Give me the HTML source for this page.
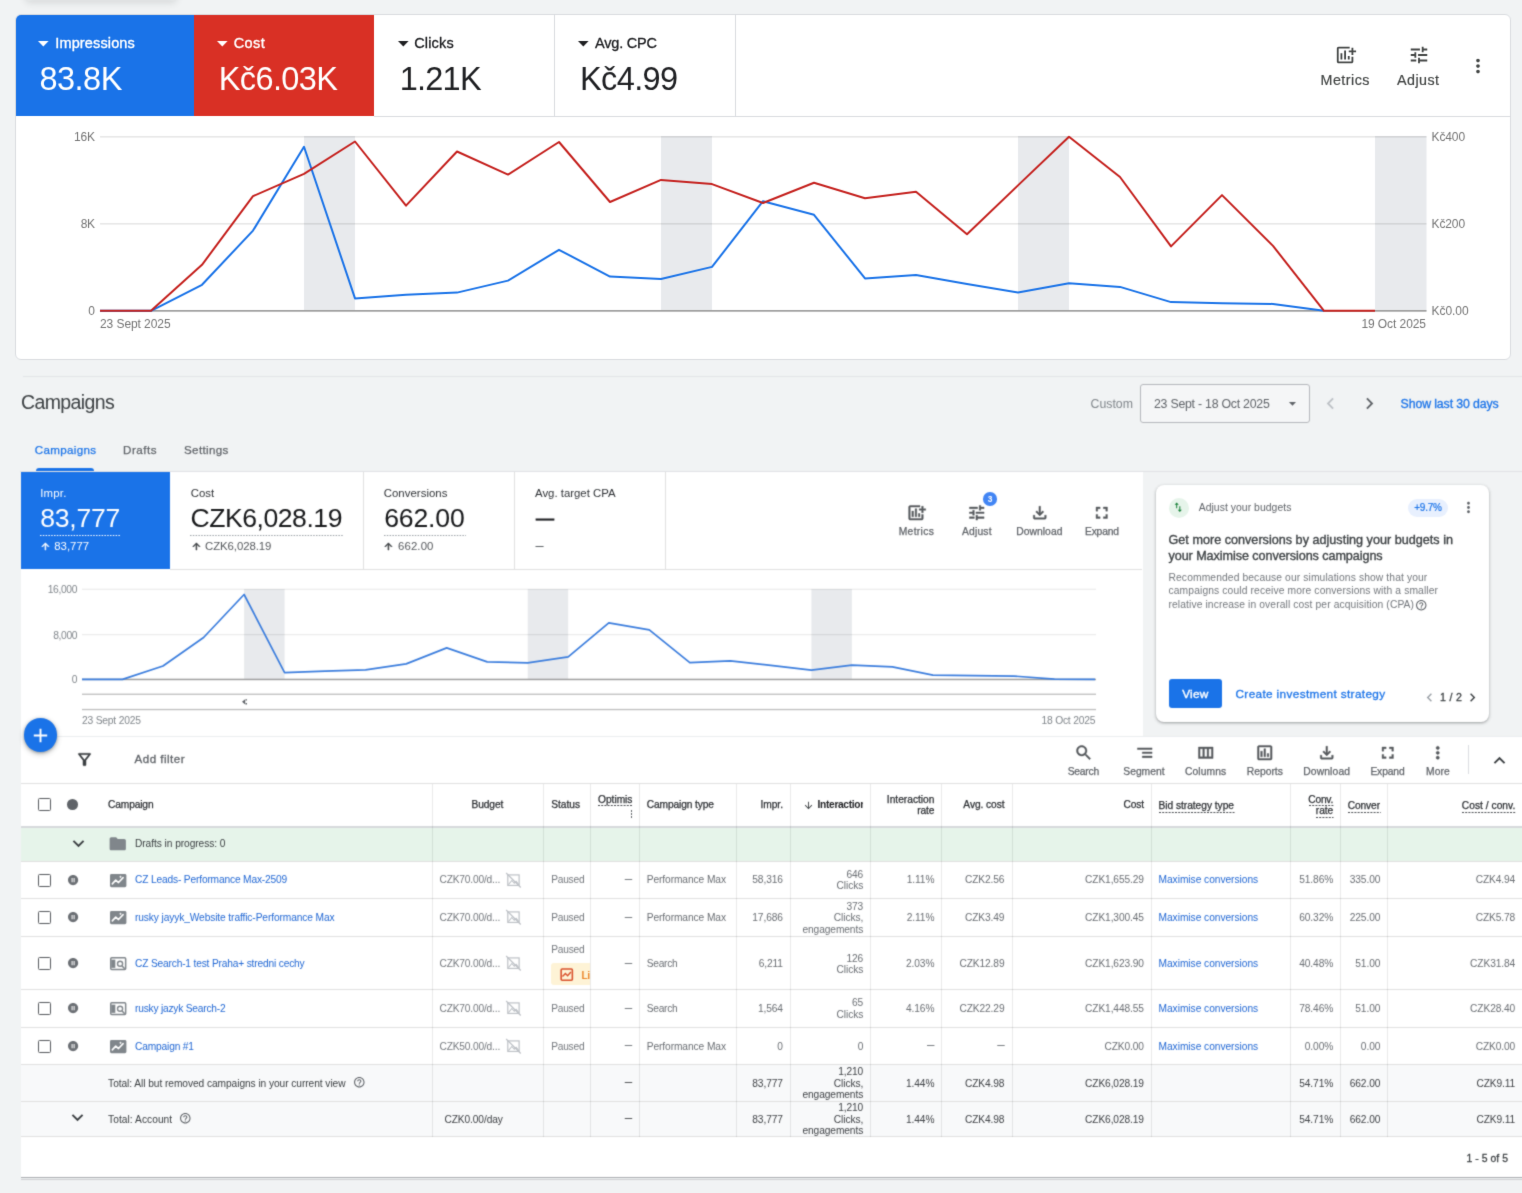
<!DOCTYPE html>
<html lang="en"><head><meta charset="utf-8"><title>Campaigns</title><style>
html,body{margin:0;padding:0;overflow:hidden}
body{width:1522px;height:1193px;overflow:hidden;background:#f1f3f4;position:relative;font-family:"Liberation Sans",sans-serif;-webkit-font-smoothing:antialiased}
.t{position:absolute;white-space:nowrap;line-height:1}
.r{position:absolute;box-sizing:border-box}
.i{position:absolute;display:block;overflow:visible}
.layer{position:absolute;left:0;top:0;width:1522px;height:1193px}
.sharp{filter:url(#f1)}
.soft{filter:url(#f2)}
</style></head><body>
<svg width="0" height="0" style="position:absolute" aria-hidden="true"><defs><filter id="f1" x="0" y="0" width="100%" height="100%" color-interpolation-filters="sRGB"><feConvolveMatrix order="3" kernelMatrix="0 1 0 1 8 1 0 1 0" divisor="12" edgeMode="duplicate" preserveAlpha="false"/></filter><filter id="f2" x="0" y="0" width="100%" height="100%" color-interpolation-filters="sRGB"><feConvolveMatrix order="3" kernelMatrix="1 3 1 3 16 3 1 3 1" divisor="32" edgeMode="duplicate" preserveAlpha="false"/></filter></defs></svg>
<!-- sec1 -->
<div class="layer sharp">
<div class="r" style="left:26px;top:-16px;width:150px;height:16px;background:#fff;border-radius:4px;box-shadow:0 2px 7px 1px rgba(60,64,67,.14)"></div>
<div class="r" style="left:15px;top:14px;width:1496px;height:346px;background:#fff;border:1px solid #dadce0;border-radius:6px;overflow:hidden"></div>
<div class="r" style="left:16px;top:15px;width:178px;height:101px;background:#1a73e8;border-top-left-radius:5px;"></div>
<div class="r" style="left:194px;top:15px;width:180px;height:101px;background:#d93025;"></div>
<div class="r" style="left:554px;top:15px;width:1px;height:101px;background:#dadce0;"></div>
<div class="r" style="left:735px;top:15px;width:1px;height:101px;background:#dadce0;"></div>
<div class="r" style="left:374px;top:116px;width:1136px;height:1px;background:#dadce0;"></div>
<svg class="i" style="left:37.8px;top:40.8px" width="10.6" height="5.6" viewBox="0 0 10 5" preserveAspectRatio="none"><path fill="#fff" d="M0 0h10L5 5z"/></svg>
<div class="t" style="left:55.30px;top:36.23px;font-size:14.5px;color:#fff;letter-spacing:0.131px;-webkit-text-stroke:0.35px #fff;">Impressions</div>
<div class="t" style="left:39.40px;top:63.19px;font-size:32.5px;color:#fff;letter-spacing:-0.485px;">83.8K</div>
<svg class="i" style="left:217.2px;top:40.8px" width="10.6" height="5.6" viewBox="0 0 10 5" preserveAspectRatio="none"><path fill="#fff" d="M0 0h10L5 5z"/></svg>
<div class="t" style="left:233.70px;top:36.23px;font-size:14.5px;color:#fff;letter-spacing:0.422px;-webkit-text-stroke:0.35px #fff;">Cost</div>
<div class="t" style="left:218.80px;top:63.19px;font-size:32.5px;color:#fff;letter-spacing:-0.622px;">Kč6.03K</div>
<svg class="i" style="left:397.6px;top:40.8px" width="10.6" height="5.6" viewBox="0 0 10 5" preserveAspectRatio="none"><path fill="#202124" d="M0 0h10L5 5z"/></svg>
<div class="t" style="left:414.20px;top:36.23px;font-size:14.5px;color:#202124;letter-spacing:0.156px;-webkit-text-stroke:0.3px #202124;">Clicks</div>
<div class="t" style="left:399.80px;top:63.19px;font-size:32.5px;color:#202124;letter-spacing:-0.785px;">1.21K</div>
<svg class="i" style="left:578.2px;top:40.8px" width="10.6" height="5.6" viewBox="0 0 10 5" preserveAspectRatio="none"><path fill="#202124" d="M0 0h10L5 5z"/></svg>
<div class="t" style="left:595.00px;top:36.23px;font-size:14.5px;color:#202124;letter-spacing:-0.199px;-webkit-text-stroke:0.3px #202124;">Avg. CPC</div>
<div class="t" style="left:580.00px;top:63.19px;font-size:32.5px;color:#202124;letter-spacing:-0.613px;">Kč4.99</div>
<svg class="i" style="left:1334.50px;top:44.00px;" width="22" height="22" viewBox="0 0 24 24"><path fill="#444746" d="M6 9.99h2v7H6zm8 3h2v4h-2zm-4-6h2v10h-2zM20 7V4h-2v3h-3v2h3v3h2V9h3V7zm-2 12H4V5h12V3H4c-1.1 0-2 .9-2 2v14c0 1.1.9 2 2 2h14c1.1 0 2-.9 2-2v-5h-2v5z"/></svg>
<div class="t" style="left:1320.49px;top:72.90px;font-size:14.3px;color:#444746;letter-spacing:0.489px;-webkit-text-stroke:0.2px #444746;">Metrics</div>
<svg class="i" style="left:1407.50px;top:44.00px;" width="22" height="22" viewBox="0 0 24 24"><path fill="#444746" d="M3 17v2h6v-2H3zM3 5v2h10V5H3zm10 16v-2h8v-2h-8v-2h-2v6h2zM7 9v2H3v2h4v2h2V9H7zm14 4v-2H11v2h10zm-6-4h2V7h4V5h-4V3h-2v6z"/></svg>
<div class="t" style="left:1396.98px;top:72.90px;font-size:14.3px;color:#444746;letter-spacing:0.460px;-webkit-text-stroke:0.2px #444746;">Adjust</div>
<svg class="i" style="left:1467.00px;top:55.00px;" width="22" height="22" viewBox="0 0 24 24"><path fill="#444746" d="M12 8c1.1 0 2-.9 2-2s-.9-2-2-2-2 .9-2 2 .9 2 2 2zm0 2c-1.1 0-2 .9-2 2s.9 2 2 2 2-.9 2-2-.9-2-2-2zm0 6c-1.1 0-2 .9-2 2s.9 2 2 2 2-.9 2-2-.9-2-2-2z"/></svg>
<svg class="i" style="left:0;top:120px" width="1522" height="220" viewBox="0 120 1522 220"><rect x="304" y="136" width="51" height="175" fill="#e8eaed"/><rect x="661" y="136" width="51" height="175" fill="#e8eaed"/><rect x="1018" y="136" width="51" height="175" fill="#e8eaed"/><rect x="1375" y="136" width="51.5" height="175" fill="#e8eaed"/><rect x="100" y="136.05" width="1326.5" height="1.5" fill="#000" fill-opacity="0.1"/><rect x="100" y="223.05" width="1326.5" height="1.5" fill="#000" fill-opacity="0.1"/><rect x="100" y="310" width="1326.5" height="1.7" fill="#9e9e9e"/><polyline points="100.0,310.8 151.0,310.8 202.0,284.8 253.0,230.6 304.0,146.8 355.0,298.4 406.0,294.7 457.0,292.6 508.0,280.6 559.0,249.8 610.0,276.6 661.0,279.0 712.0,266.9 763.0,201.2 814.0,214.8 865.0,278.4 916.0,275.0 967.0,284.0 1018.0,292.6 1069.0,283.2 1120.0,286.9 1171.0,302.1 1222.0,303.2 1273.0,303.9 1324.0,310.8" fill="none" stroke="#1a73e8" stroke-width="2" stroke-linejoin="round"/><polyline points="100.0,310.8 151.0,310.8 202.0,264.8 253.0,196.2 304.0,173.8 355.0,141.5 406.0,205.6 457.0,151.5 508.0,174.6 559.0,142.0 610.0,202.0 661.0,179.9 712.0,184.1 763.0,203.0 814.0,182.8 865.0,198.3 916.0,191.7 967.0,234.3 1018.0,185.4 1069.0,136.8 1120.0,177.0 1171.0,246.4 1222.0,195.1 1273.0,245.9 1324.0,310.8 1375.0,310.8" fill="none" stroke="#c5221f" stroke-width="2" stroke-linejoin="round"/></svg>
<div class="t" style="left:73.88px;top:130.84px;font-size:12px;color:#757575;letter-spacing:-0.117px;">16K</div>
<div class="t" style="left:80.66px;top:217.84px;font-size:12px;color:#757575;letter-spacing:-0.339px;">8K</div>
<div class="t" style="left:88.33px;top:304.84px;font-size:12px;color:#757575;">0</div>
<div class="t" style="left:100.00px;top:317.84px;font-size:12px;color:#757575;letter-spacing:-0.074px;">23 Sept 2025</div>
<div class="t" style="left:1361.42px;top:317.84px;font-size:12px;color:#757575;letter-spacing:-0.079px;">19 Oct 2025</div>
<div class="t" style="left:1431.50px;top:130.84px;font-size:12px;color:#757575;letter-spacing:-0.105px;">Kč400</div>
<div class="t" style="left:1431.50px;top:217.84px;font-size:12px;color:#757575;letter-spacing:-0.105px;">Kč200</div>
<div class="t" style="left:1431.50px;top:304.84px;font-size:12px;color:#757575;letter-spacing:-0.060px;">Kč0.00</div>
</div>
<!-- sec2 -->
<div class="layer soft">
<div class="r" style="left:23px;top:375.7px;width:1499px;height:1.2px;background:#e2e4e6;"></div>
<div class="t" style="left:21.00px;top:393.49px;font-size:19.5px;color:#3c4043;letter-spacing:-0.625px;">Campaigns</div>
<div class="t" style="left:1090.50px;top:397.59px;font-size:12.3px;color:#80868b;letter-spacing:0.021px;">Custom</div>
<div class="r" style="left:1140px;top:383.5px;width:170px;height:39.5px;border:1px solid #b4b7bb;border-radius:3px;background:#f5f6f7"></div>
<div class="t" style="left:1154.00px;top:397.59px;font-size:12.3px;color:#5f6368;letter-spacing:-0.230px;">23 Sept - 18 Oct 2025</div>
<svg class="i" style="left:1284.30px;top:395.00px;" width="17" height="17" viewBox="0 0 24 24"><path fill="#5f6368" d="M7 10l5 5 5-5z"/></svg>
<svg class="i" style="left:1319.00px;top:392.10px;" width="23" height="23" viewBox="0 0 24 24"><path fill="#bdc1c6" d="M15.41 7.41L14 6l-6 6 6 6 1.41-1.41L10.83 12z"/></svg>
<svg class="i" style="left:1358.10px;top:392.10px;" width="23" height="23" viewBox="0 0 24 24"><path fill="#5f6368" d="M10 6L8.59 7.41 13.17 12l-4.58 4.59L10 18l6-6z"/></svg>
<div class="t" style="left:1400.60px;top:397.59px;font-size:12.3px;color:#1a73e8;letter-spacing:-0.107px;-webkit-text-stroke:0.3px #1a73e8;">Show last 30 days</div>
<div class="t" style="left:34.70px;top:444.28px;font-size:11.6px;color:#1a73e8;letter-spacing:0.337px;-webkit-text-stroke:0.25px #1a73e8;">Campaigns</div>
<div class="t" style="left:123.00px;top:444.28px;font-size:11.6px;color:#5f6368;letter-spacing:0.511px;-webkit-text-stroke:0.25px #5f6368;">Drafts</div>
<div class="t" style="left:184.00px;top:444.28px;font-size:11.6px;color:#5f6368;letter-spacing:0.361px;-webkit-text-stroke:0.25px #5f6368;">Settings</div>
<div class="r" style="left:36.2px;top:467.8px;width:58.2px;height:3.4px;background:#1a73e8;border-radius:3px 3px 0 0;"></div>
<div class="r" style="left:20px;top:471px;width:1502px;height:1px;background:#e0e2e4;"></div>
<div class="r" style="left:20.5px;top:471.7px;width:1122px;height:265px;background:#fff;"></div>
<div class="r" style="left:20.7px;top:471.7px;width:149.6px;height:97px;background:#1a73e8;"></div>
<div class="r" style="left:363.0px;top:472px;width:1px;height:97px;background:#e0e0e0;"></div>
<div class="r" style="left:513.9px;top:472px;width:1px;height:97px;background:#e0e0e0;"></div>
<div class="r" style="left:664.9px;top:472px;width:1px;height:97px;background:#e0e0e0;"></div>
<div class="r" style="left:170.3px;top:568.7px;width:972px;height:1px;background:#e0e0e0;"></div>
<div class="t" style="left:40.20px;top:487.85px;font-size:11.4px;color:#fff;letter-spacing:0.213px;">Impr.</div>
<div class="t" style="left:40.20px;top:505.48px;font-size:26.6px;color:#fff;letter-spacing:-0.225px;">83,777</div>
<svg class="i" style="left:40.2px;top:534px" width="80" height="3" viewBox="0 0 80 3"><line x1="0" y1="1.5" x2="80" y2="1.5" stroke="#fff" stroke-width="1.2" stroke-dasharray="1.5 1.3"/></svg>
<svg class="i" style="left:39.80px;top:541.10px;" width="10.8" height="10.8" viewBox="0 0 24 24"><path fill="#fff" stroke="#fff" stroke-width="1.2" stroke-linejoin="round" d="M4 12l1.41 1.41L11 7.83V20h2V7.83l5.58 5.59L20 12l-8-8-8 8z"/></svg>
<div class="t" style="left:54.20px;top:540.85px;font-size:11.4px;color:#fff;letter-spacing:0.023px;">83,777</div>
<div class="t" style="left:190.70px;top:487.85px;font-size:11.4px;color:#2f3236;letter-spacing:0.040px;">Cost</div>
<div class="t" style="left:190.50px;top:505.48px;font-size:26.6px;color:#17181a;letter-spacing:-0.476px;">CZK6,028.19</div>
<svg class="i" style="left:190.3px;top:534px" width="153" height="3" viewBox="0 0 153 3"><line x1="0" y1="1.5" x2="153" y2="1.5" stroke="#9aa0a6" stroke-width="1.2" stroke-dasharray="1.5 1.3"/></svg>
<svg class="i" style="left:190.60px;top:541.10px;" width="10.8" height="10.8" viewBox="0 0 24 24"><path fill="#3c4043" stroke="#3c4043" stroke-width="1.2" stroke-linejoin="round" d="M4 12l1.41 1.41L11 7.83V20h2V7.83l5.58 5.59L20 12l-8-8-8 8z"/></svg>
<div class="t" style="left:205.00px;top:540.85px;font-size:11.4px;color:#55585c;letter-spacing:-0.079px;">CZK6,028.19</div>
<div class="t" style="left:383.70px;top:487.85px;font-size:11.4px;color:#2f3236;letter-spacing:0.040px;">Conversions</div>
<div class="t" style="left:384.20px;top:505.48px;font-size:26.6px;color:#17181a;letter-spacing:-0.158px;">662.00</div>
<svg class="i" style="left:384px;top:534px" width="82" height="3" viewBox="0 0 82 3"><line x1="0" y1="1.5" x2="82" y2="1.5" stroke="#9aa0a6" stroke-width="1.2" stroke-dasharray="1.5 1.3"/></svg>
<svg class="i" style="left:383.40px;top:541.10px;" width="10.8" height="10.8" viewBox="0 0 24 24"><path fill="#3c4043" stroke="#3c4043" stroke-width="1.2" stroke-linejoin="round" d="M4 12l1.41 1.41L11 7.83V20h2V7.83l5.58 5.59L20 12l-8-8-8 8z"/></svg>
<div class="t" style="left:398.00px;top:540.85px;font-size:11.4px;color:#55585c;letter-spacing:0.123px;">662.00</div>
<div class="t" style="left:535.00px;top:487.85px;font-size:11.4px;color:#2f3236;letter-spacing:-0.005px;">Avg. target CPA</div>
<div class="t" style="left:536.00px;top:509.36px;font-size:18px;color:#202124;-webkit-text-stroke:0.8px #202124;">—</div>
<div class="t" style="left:535.50px;top:538.03px;font-size:14.5px;color:#5f6368;">–</div>
<svg class="i" style="left:907.05px;top:503.25px;" width="19.5" height="19.5" viewBox="0 0 24 24"><path fill="#55585c" stroke="#55585c" stroke-width="0.5" stroke-linejoin="round" d="M6 9.99h2v7H6zm8 3h2v4h-2zm-4-6h2v10h-2zM20 7V4h-2v3h-3v2h3v3h2V9h3V7zm-2 12H4V5h12V3H4c-1.1 0-2 .9-2 2v14c0 1.1.9 2 2 2h14c1.1 0 2-.9 2-2v-5h-2v5z"/></svg>
<div class="t" style="left:898.70px;top:526.98px;font-size:10.3px;color:#5f6368;letter-spacing:0.330px;-webkit-text-stroke:0.25px #5f6368;">Metrics</div>
<svg class="i" style="left:966.85px;top:503.25px;" width="19.5" height="19.5" viewBox="0 0 24 24"><path fill="#55585c" stroke="#55585c" stroke-width="0.5" stroke-linejoin="round" d="M3 17v2h6v-2H3zM3 5v2h10V5H3zm10 16v-2h8v-2h-8v-2h-2v6h2zM7 9v2H3v2h4v2h2V9H7zm14 4v-2H11v2h10zm-6-4h2V7h4V5h-4V3h-2v6z"/></svg>
<div class="t" style="left:962.00px;top:526.98px;font-size:10.3px;color:#5f6368;letter-spacing:0.179px;-webkit-text-stroke:0.25px #5f6368;">Adjust</div>
<svg class="i" style="left:1029.75px;top:503.25px;" width="19.5" height="19.5" viewBox="0 0 24 24"><path fill="#55585c" stroke="#55585c" stroke-width="0.5" stroke-linejoin="round" d="M18 15v3H6v-3H4v3c0 1.1.9 2 2 2h12c1.1 0 2-.9 2-2v-3h-2zm-1-4l-1.41-1.41L13 12.17V4h-2v8.17L8.41 9.59 7 11l5 5 5-5z"/></svg>
<div class="t" style="left:1016.20px;top:526.98px;font-size:10.3px;color:#5f6368;letter-spacing:0.062px;-webkit-text-stroke:0.25px #5f6368;">Download</div>
<svg class="i" style="left:1092.45px;top:503.25px;" width="19.5" height="19.5" viewBox="0 0 24 24"><path fill="#55585c" stroke="#55585c" stroke-width="0.5" stroke-linejoin="round" d="M7 14H5v5h5v-2H7v-3zm-2-4h2V7h3V5H5v5zm12 7h-3v2h5v-5h-2v3zM14 5v2h3v3h2V5h-5z"/></svg>
<div class="t" style="left:1085.00px;top:526.98px;font-size:10.3px;color:#5f6368;letter-spacing:-0.205px;-webkit-text-stroke:0.25px #5f6368;">Expand</div>
<div class="r" style="left:983.2px;top:492px;width:13.6px;height:13.6px;border-radius:50%;background:#4285f4"></div>
<div class="t" style="left:987.66px;top:494.79px;font-size:8.4px;color:#fff;font-weight:700;">3</div>
<svg class="i" style="left:0;top:580px" width="1150" height="140" viewBox="0 580 1150 140"><rect x="244.1" y="589" width="40.5" height="90.5" fill="#e8eaed"/><rect x="527.7" y="589" width="40.5" height="90.5" fill="#e8eaed"/><rect x="811.4" y="589" width="40.5" height="90.5" fill="#e8eaed"/><rect x="82" y="588.6999999999999" width="1014" height="1.2" fill="#000" fill-opacity="0.08"/><rect x="82" y="634.0" width="1014" height="1.2" fill="#000" fill-opacity="0.08"/><rect x="82" y="678.7" width="1014" height="1.5" fill="#9e9e9e"/><rect x="82" y="693.6" width="1014" height="1.3" fill="#bdbdbd"/><rect x="82" y="708.9" width="1014" height="1.3" fill="#bdbdbd"/><polyline points="82.0,679.4 122.5,679.4 163.0,666.0 203.6,637.5 244.1,594.5 284.6,672.6 325.1,671.1 365.6,669.9 406.2,663.9 446.7,647.9 487.2,661.9 527.7,662.9 568.2,656.9 608.8,622.9 649.3,629.9 689.8,662.6 730.3,660.9 770.8,665.4 811.4,670.1 851.9,665.1 892.4,666.9 932.9,675.1 973.4,675.6 1014.0,676.1 1054.5,679.1 1095.0,679.4" fill="none" stroke="#3b7ddd" stroke-width="1.7" stroke-linejoin="round"/><path d="M242 701.8l3.2-2.6v5.2z M245.6 699.2h1.4v1.4h-1.4z M245.6 703h1.4v1.4h-1.4z" fill="#5f6368"/></svg>
<div class="t" style="left:47.67px;top:585.28px;font-size:10.3px;color:#80868b;letter-spacing:-0.333px;">16,000</div>
<div class="t" style="left:53.15px;top:630.58px;font-size:10.3px;color:#80868b;letter-spacing:-0.355px;">8,000</div>
<div class="t" style="left:71.77px;top:675.48px;font-size:10.3px;color:#80868b;">0</div>
<div class="t" style="left:82.00px;top:715.88px;font-size:10.3px;color:#80868b;letter-spacing:-0.215px;">23 Sept 2025</div>
<div class="t" style="left:1041.48px;top:715.88px;font-size:10.3px;color:#80868b;letter-spacing:-0.219px;">18 Oct 2025</div>
<div class="r" style="left:1155.5px;top:484.5px;width:333.5px;height:237.7px;background:#fff;border-radius:8px;box-shadow:0 1px 2px rgba(60,64,67,.3),0 1px 3px 1px rgba(60,64,67,.15)"></div>
<div class="r" style="left:1168.5px;top:497.5px;width:20px;height:20px;border-radius:50%;background:#e6f4ea"></div>
<svg class="i" style="left:1172.25px;top:501.25px;" width="12.5" height="12.5" viewBox="0 0 24 24"><path fill="#188038" d="M16 17.01V10h-2v7.01h-3L15 21l4-3.99h-3zM9 3L5 6.99h3V14h2V6.99h3L9 3z"/></svg>
<div class="t" style="left:1198.70px;top:502.50px;font-size:10.4px;color:#5f6368;letter-spacing:0.046px;">Adjust your budgets</div>
<div class="r" style="left:1407.7px;top:498.8px;width:40.7px;height:17.8px;border-radius:9px;background:#e8f0fe"></div>
<div class="t" style="left:1414.20px;top:502.64px;font-size:10px;color:#1a73e8;letter-spacing:-0.207px;-webkit-text-stroke:0.2px #1a73e8;">+9.7%</div>
<svg class="i" style="left:1460.40px;top:499.20px;" width="17" height="17" viewBox="0 0 24 24"><path fill="#5f6368" d="M12 8c1.1 0 2-.9 2-2s-.9-2-2-2-2 .9-2 2 .9 2 2 2zm0 2c-1.1 0-2 .9-2 2s.9 2 2 2 2-.9 2-2-.9-2-2-2zm0 6c-1.1 0-2 .9-2 2s.9 2 2 2 2-.9 2-2-.9-2-2-2z"/></svg>
<div class="t" style="left:1168.50px;top:533.53px;font-size:12.6px;color:#3c4043;letter-spacing:0.020px;-webkit-text-stroke:0.35px #3c4043;">Get more conversions by adjusting your budgets in</div>
<div class="t" style="left:1168.50px;top:549.83px;font-size:12.6px;color:#3c4043;letter-spacing:-0.062px;-webkit-text-stroke:0.35px #3c4043;">your Maximise conversions campaigns</div>
<div class="t" style="left:1168.50px;top:572.88px;font-size:10.3px;color:#73777c;letter-spacing:0.106px;">Recommended because our simulations show that your</div>
<div class="t" style="left:1168.50px;top:586.28px;font-size:10.3px;color:#73777c;letter-spacing:0.116px;">campaigns could receive more conversions with a smaller</div>
<div class="t" style="left:1168.50px;top:599.68px;font-size:10.3px;color:#73777c;letter-spacing:0.099px;">relative increase in overall cost per acquisition (CPA)</div>
<svg class="i" style="left:1415.05px;top:598.95px;" width="12.5" height="12.5" viewBox="0 0 24 24"><path fill="#5f6368" d="M11 18h2v-2h-2v2zm1-16C6.48 2 2 6.48 2 12s4.48 10 10 10 10-4.48 10-10S17.52 2 12 2zm0 18c-4.41 0-8-3.59-8-8s3.59-8 8-8 8 3.59 8 8-3.59 8-8 8zm0-14c-2.21 0-4 1.79-4 4h2c0-1.1.9-2 2-2s2 .9 2 2c0 2-3 1.75-3 5h2c0-2.25 3-2.5 3-5 0-2.21-1.79-4-4-4z"/></svg>
<div class="r" style="left:1168.5px;top:678.8px;width:53.4px;height:29.5px;border-radius:3px;background:#1a73e8"></div>
<div class="t" style="left:1182.17px;top:688.61px;font-size:11.8px;color:#fff;letter-spacing:0.234px;-webkit-text-stroke:0.4px #fff;">View</div>
<div class="t" style="left:1235.50px;top:688.61px;font-size:11.8px;color:#1a73e8;letter-spacing:0.346px;-webkit-text-stroke:0.3px #1a73e8;">Create investment strategy</div>
<svg class="i" style="left:1421.00px;top:688.90px;" width="17" height="17" viewBox="0 0 24 24"><path fill="#9aa0a6" d="M15.41 7.41L14 6l-6 6 6 6 1.41-1.41L10.83 12z"/></svg>
<div class="t" style="left:1440.00px;top:692.23px;font-size:10.6px;color:#3c4043;letter-spacing:0.335px;-webkit-text-stroke:0.3px #3c4043;">1 / 2</div>
<svg class="i" style="left:1463.80px;top:688.90px;" width="17" height="17" viewBox="0 0 24 24"><path fill="#3c4043" d="M10 6L8.59 7.41 13.17 12l-4.58 4.59L10 18l6-6z"/></svg>
</div>
<!-- sec3 -->
<div class="layer soft">
<div class="r" style="left:20.5px;top:736.5px;width:1502px;height:440.8px;background:#fff"></div>
<div class="r" style="left:20.5px;top:1177.3px;width:1502px;height:1.2px;background:#a9acaf"></div>
<div class="r" style="left:20.5px;top:1178.5px;width:1502px;height:1.2px;background:#cdcfd2"></div>
<div class="r" style="left:57px;top:736px;width:1465px;height:1px;background:#ebedef;"></div>
<div class="r" style="left:24.2px;top:718.4px;width:33.2px;height:33.2px;border-radius:50%;background:#1a73e8;box-shadow:0 1px 3px rgba(60,64,67,.4),0 2px 5px 1px rgba(60,64,67,.2)"></div>
<svg class="i" style="left:29.30px;top:723.50px;" width="23" height="23" viewBox="0 0 24 24"><path fill="#fff" d="M19 13h-6v6h-2v-6H5v-2h6V5h2v6h6v2z"/></svg>
<svg class="i" style="left:75.10px;top:750.30px;" width="19" height="19" viewBox="0 0 24 24"><path fill="#3c4043" stroke="#3c4043" stroke-width="0.4" stroke-linejoin="round" d="M7 6h10l-5.01 6.3L7 6zm-2.75-.39C6.27 8.2 10 13 10 13v6c0 .55.45 1 1 1h2c.55 0 1-.45 1-1v-6s3.72-4.8 5.74-7.39c.51-.66.04-1.61-.79-1.61H5.04c-.83 0-1.3.95-.79 1.61z"/></svg>
<div class="t" style="left:134.50px;top:753.48px;font-size:11.6px;color:#5f6368;letter-spacing:0.473px;-webkit-text-stroke:0.3px #5f6368;">Add filter</div>
<svg class="i" style="left:1073.75px;top:742.55px;" width="19.5" height="19.5" viewBox="0 0 24 24"><path fill="#55585c" stroke="#55585c" stroke-width="0.5" stroke-linejoin="round" d="M15.5 14h-.79l-.28-.27C15.41 12.59 16 11.11 16 9.5 16 5.91 13.09 3 9.5 3S3 5.91 3 9.5 5.91 16 9.5 16c1.61 0 3.09-.59 4.23-1.57l.27.28v.79l5 4.99L20.49 19l-4.99-5zm-6 0C7.01 14 5 11.99 5 9.5S7.01 5 9.5 5 14 7.01 14 9.5 11.99 14 9.5 14z"/></svg>
<div class="t" style="left:1067.70px;top:766.78px;font-size:10.3px;color:#5f6368;letter-spacing:-0.222px;-webkit-text-stroke:0.25px #5f6368;">Search</div>
<svg class="i" style="left:1134.75px;top:742.55px;" width="19.5" height="19.5" viewBox="0 0 24 24"><path fill="#55585c" stroke="#55585c" stroke-width="0.5" stroke-linejoin="round" d="M9 18h12v-2H9v2zM3 6v2h18V6H3zm6 7h12v-2H9v2z"/></svg>
<div class="t" style="left:1123.30px;top:766.78px;font-size:10.3px;color:#5f6368;-webkit-text-stroke:0.25px #5f6368;">Segment</div>
<svg class="i" style="left:1196.25px;top:742.55px;" width="19.5" height="19.5" viewBox="0 0 24 24"><path fill="#55585c" stroke="#55585c" stroke-width="0.5" stroke-linejoin="round" d="M3 5v14h18V5H3zm5.33 12H5V7h3.33v10zm5.34 0h-3.33V7h3.33v10zM19 17h-3.33V7H19v10z"/></svg>
<div class="t" style="left:1185.00px;top:766.78px;font-size:10.3px;color:#5f6368;letter-spacing:0.094px;-webkit-text-stroke:0.25px #5f6368;">Columns</div>
<svg class="i" style="left:1255.45px;top:742.55px;" width="19.5" height="19.5" viewBox="0 0 24 24"><path fill="#55585c" stroke="#55585c" stroke-width="0.5" stroke-linejoin="round" d="M19 3H5c-1.1 0-2 .9-2 2v14c0 1.1.9 2 2 2h14c1.1 0 2-.9 2-2V5c0-1.1-.9-2-2-2zm0 16H5V5h14v14zM7 10h2v7H7zm4-3h2v10h-2zm4 6h2v4h-2z"/></svg>
<div class="t" style="left:1246.80px;top:766.78px;font-size:10.3px;color:#5f6368;letter-spacing:-0.009px;-webkit-text-stroke:0.25px #5f6368;">Reports</div>
<svg class="i" style="left:1317.25px;top:742.55px;" width="19.5" height="19.5" viewBox="0 0 24 24"><path fill="#55585c" stroke="#55585c" stroke-width="0.5" stroke-linejoin="round" d="M18 15v3H6v-3H4v3c0 1.1.9 2 2 2h12c1.1 0 2-.9 2-2v-3h-2zm-1-4l-1.41-1.41L13 12.17V4h-2v8.17L8.41 9.59 7 11l5 5 5-5z"/></svg>
<div class="t" style="left:1303.30px;top:766.78px;font-size:10.3px;color:#5f6368;letter-spacing:0.124px;-webkit-text-stroke:0.25px #5f6368;">Download</div>
<svg class="i" style="left:1377.65px;top:742.55px;" width="19.5" height="19.5" viewBox="0 0 24 24"><path fill="#55585c" stroke="#55585c" stroke-width="0.5" stroke-linejoin="round" d="M7 14H5v5h5v-2H7v-3zm-2-4h2V7h3V5H5v5zm12 7h-3v2h5v-5h-2v3zM14 5v2h3v3h2V5h-5z"/></svg>
<div class="t" style="left:1370.40px;top:766.78px;font-size:10.3px;color:#5f6368;letter-spacing:-0.139px;-webkit-text-stroke:0.25px #5f6368;">Expand</div>
<svg class="i" style="left:1428.45px;top:742.55px;" width="19.5" height="19.5" viewBox="0 0 24 24"><path fill="#55585c" stroke="#55585c" stroke-width="0.5" stroke-linejoin="round" d="M12 8c1.1 0 2-.9 2-2s-.9-2-2-2-2 .9-2 2 .9 2 2 2zm0 2c-1.1 0-2 .9-2 2s.9 2 2 2 2-.9 2-2-.9-2-2-2zm0 6c-1.1 0-2 .9-2 2s.9 2 2 2 2-.9 2-2-.9-2-2-2z"/></svg>
<div class="t" style="left:1426.00px;top:766.78px;font-size:10.3px;color:#5f6368;letter-spacing:0.059px;-webkit-text-stroke:0.25px #5f6368;">More</div>
<div class="r" style="left:1468px;top:744.5px;width:1px;height:29px;background:#dadce0;"></div>
<svg class="i" style="left:1487.60px;top:748.50px;" width="23" height="23" viewBox="0 0 24 24"><path fill="#3c4043" d="M12 8l-6 6 1.41 1.41L12 10.83l4.59 4.58L18 14z"/></svg>
<div class="r" style="left:20.5px;top:826.5px;width:1501.5px;height:34.7px;background:#e6f4ea;"></div>
<div class="r" style="left:20.5px;top:1064.9px;width:1501.5px;height:72px;background:#f8f9fa;"></div>
<div class="r" style="left:20.5px;top:783.0px;width:1501.5px;height:1px;background:#e0e0e0;"></div>
<div class="r" style="left:20.5px;top:825.5px;width:1501.5px;height:2px;background:#d6d9dc;"></div>
<div class="r" style="left:20.5px;top:860.7px;width:1501.5px;height:1px;background:#e0e0e0;"></div>
<div class="r" style="left:20.5px;top:898.2px;width:1501.5px;height:1px;background:#e0e0e0;"></div>
<div class="r" style="left:20.5px;top:935.9px;width:1501.5px;height:1px;background:#e0e0e0;"></div>
<div class="r" style="left:20.5px;top:988.9px;width:1501.5px;height:1px;background:#e0e0e0;"></div>
<div class="r" style="left:20.5px;top:1026.7px;width:1501.5px;height:1px;background:#e0e0e0;"></div>
<div class="r" style="left:20.5px;top:1064.4px;width:1501.5px;height:1px;background:#e0e0e0;"></div>
<div class="r" style="left:20.5px;top:1100.6px;width:1501.5px;height:1px;background:#e0e0e0;"></div>
<div class="r" style="left:20.5px;top:1136.3px;width:1501.5px;height:1px;background:#e0e0e0;"></div>
<div class="r" style="left:431.8px;top:783.5px;width:1px;height:353.3px;background:rgba(0,0,0,0.085);"></div>
<div class="r" style="left:543.1px;top:783.5px;width:1px;height:353.3px;background:rgba(0,0,0,0.085);"></div>
<div class="r" style="left:589.8px;top:783.5px;width:1px;height:353.3px;background:rgba(0,0,0,0.085);"></div>
<div class="r" style="left:638.7px;top:783.5px;width:1px;height:353.3px;background:rgba(0,0,0,0.085);"></div>
<div class="r" style="left:735.9px;top:783.5px;width:1px;height:353.3px;background:rgba(0,0,0,0.085);"></div>
<div class="r" style="left:789.7px;top:783.5px;width:1px;height:353.3px;background:rgba(0,0,0,0.085);"></div>
<div class="r" style="left:869.8px;top:783.5px;width:1px;height:353.3px;background:rgba(0,0,0,0.085);"></div>
<div class="r" style="left:941.3px;top:783.5px;width:1px;height:353.3px;background:rgba(0,0,0,0.085);"></div>
<div class="r" style="left:1011.6px;top:783.5px;width:1px;height:353.3px;background:rgba(0,0,0,0.085);"></div>
<div class="r" style="left:1150.7px;top:783.5px;width:1px;height:353.3px;background:rgba(0,0,0,0.085);"></div>
<div class="r" style="left:1290.4px;top:783.5px;width:1px;height:353.3px;background:rgba(0,0,0,0.085);"></div>
<div class="r" style="left:1339.9px;top:783.5px;width:1px;height:353.3px;background:rgba(0,0,0,0.085);"></div>
<div class="r" style="left:1386.9px;top:783.5px;width:1px;height:353.3px;background:rgba(0,0,0,0.085);"></div>
<div class="r" style="left:38px;top:798px;width:13px;height:13px;border:1.7px solid #55585c;border-radius:1.5px"></div>
<div class="r" style="left:67.4px;top:799.2px;width:10.6px;height:10.6px;border-radius:50%;background:#5f6368"></div>
<div class="t" style="left:108.00px;top:800.07px;font-size:10.2px;color:#2b2e32;letter-spacing:-0.124px;-webkit-text-stroke:0.25px #2b2e32;">Campaign</div>
<div class="t" style="left:471.40px;top:800.07px;font-size:10.2px;color:#2b2e32;letter-spacing:-0.054px;-webkit-text-stroke:0.25px #2b2e32;">Budget</div>
<div class="t" style="left:551.30px;top:800.07px;font-size:10.2px;color:#2b2e32;letter-spacing:-0.036px;-webkit-text-stroke:0.25px #2b2e32;">Status</div>
<div class="t" style="left:598.00px;top:795.27px;font-size:10.2px;color:#2b2e32;letter-spacing:-0.010px;-webkit-text-stroke:0.25px #2b2e32;">Optimis</div>
<svg class="i" style="left:598px;top:804.2px" width="34.5" height="3" viewBox="0 0 34.5 3"><line x1="0" y1="1.5" x2="34.5" y2="1.5" stroke="#4a4d51" stroke-width="1.1" stroke-dasharray="2 1.2"/></svg>
<div class="r" style="left:631px;top:809.5px;width:1px;height:8px;background:repeating-linear-gradient(180deg,#5f6368 0 1.5px,transparent 1.5px 3px)"></div>
<div class="t" style="left:646.70px;top:800.07px;font-size:10.2px;color:#2b2e32;letter-spacing:-0.100px;-webkit-text-stroke:0.25px #2b2e32;">Campaign type</div>
<div class="t" style="left:760.39px;top:800.07px;font-size:10.2px;color:#2b2e32;letter-spacing:-0.014px;-webkit-text-stroke:0.25px #2b2e32;">Impr.</div>
<svg class="i" style="left:802.50px;top:799.70px;" width="11" height="11" viewBox="0 0 24 24"><path fill="#3c4043" d="M20 12l-1.41-1.41L13 16.17V4h-2v12.17l-5.58-5.59L4 12l8 8 8-8z"/></svg>
<div class="r" style="left:817.6px;top:795px;width:45.8px;height:18px;overflow:hidden"><div class="t" style="left:0.00px;top:5.07px;font-size:10.2px;color:#202124;letter-spacing:-0.330px;font-weight:700;">Interactions</div></div>
<div class="t" style="left:886.81px;top:794.57px;font-size:10.2px;color:#2b2e32;letter-spacing:0.007px;-webkit-text-stroke:0.25px #2b2e32;">Interaction</div>
<div class="t" style="left:917.13px;top:805.97px;font-size:10.2px;color:#2b2e32;letter-spacing:-0.069px;-webkit-text-stroke:0.25px #2b2e32;">rate</div>
<div class="t" style="left:963.34px;top:800.07px;font-size:10.2px;color:#2b2e32;letter-spacing:-0.063px;-webkit-text-stroke:0.25px #2b2e32;">Avg. cost</div>
<div class="t" style="left:1123.48px;top:800.07px;font-size:10.2px;color:#2b2e32;letter-spacing:-0.118px;-webkit-text-stroke:0.25px #2b2e32;">Cost</div>
<div class="t" style="left:1158.50px;top:800.77px;font-size:10.2px;color:#2b2e32;letter-spacing:-0.028px;-webkit-text-stroke:0.25px #2b2e32;">Bid strategy type</div>
<svg class="i" style="left:1158.5px;top:810.5px" width="75.5" height="3" viewBox="0 0 75.5 3"><line x1="0" y1="1.5" x2="75.5" y2="1.5" stroke="#4a4d51" stroke-width="1.1" stroke-dasharray="2 1.2"/></svg>
<div class="t" style="left:1308.36px;top:795.07px;font-size:10.2px;color:#2b2e32;letter-spacing:-0.237px;-webkit-text-stroke:0.25px #2b2e32;">Conv.</div>
<svg class="i" style="left:1308.6px;top:804.3px" width="24.7" height="3" viewBox="0 0 24.7 3"><line x1="0" y1="1.5" x2="24.7" y2="1.5" stroke="#4a4d51" stroke-width="1.1" stroke-dasharray="2 1.2"/></svg>
<div class="t" style="left:1315.78px;top:806.27px;font-size:10.2px;color:#2b2e32;letter-spacing:-0.019px;-webkit-text-stroke:0.25px #2b2e32;">rate</div>
<svg class="i" style="left:1315.8px;top:816.2px" width="17.5" height="3" viewBox="0 0 17.5 3"><line x1="0" y1="1.5" x2="17.5" y2="1.5" stroke="#4a4d51" stroke-width="1.1" stroke-dasharray="2 1.2"/></svg>
<div class="r" style="left:1347.7px;top:795px;width:32.8px;height:18px;overflow:hidden"><div class="t" style="left:0.00px;top:5.77px;font-size:10.2px;color:#2b2e32;letter-spacing:-0.100px;-webkit-text-stroke:0.25px #2b2e32;">Conversions</div></div>
<svg class="i" style="left:1347.7px;top:810.5px" width="32.7" height="3" viewBox="0 0 32.7 3"><line x1="0" y1="1.5" x2="32.7" y2="1.5" stroke="#4a4d51" stroke-width="1.1" stroke-dasharray="2 1.2"/></svg>
<div class="t" style="left:1461.83px;top:800.77px;font-size:10.2px;color:#2b2e32;letter-spacing:0.034px;-webkit-text-stroke:0.25px #2b2e32;">Cost / conv.</div>
<svg class="i" style="left:1461.8px;top:810.5px" width="53.5" height="3" viewBox="0 0 53.5 3"><line x1="0" y1="1.5" x2="53.5" y2="1.5" stroke="#4a4d51" stroke-width="1.1" stroke-dasharray="2 1.2"/></svg>
<svg class="i" style="left:66.50px;top:831.70px;" width="23" height="23" viewBox="0 0 24 24"><path fill="#3c4043" d="M16.59 8.59L12 13.17 7.41 8.59 6 10l6 6 6-6z"/></svg>
<svg class="i" style="left:108.45px;top:834.25px;" width="19.5" height="19.5" viewBox="0 0 24 24"><path fill="#80868b" d="M10 4H4c-1.1 0-1.99.9-1.99 2L2 18c0 1.1.9 2 2 2h16c1.1 0 2-.9 2-2V8c0-1.1-.9-2-2-2h-8l-2-2z"/></svg>
<div class="t" style="left:135.00px;top:838.97px;font-size:10.2px;color:#3c4043;letter-spacing:-0.063px;">Drafts in progress: 0</div>
<div class="r" style="left:38px;top:873.6px;width:13px;height:13px;border:1.7px solid #55585c;border-radius:1.5px"></div>
<svg class="i" style="left:66.60px;top:873.90px;" width="12.2" height="12.2" viewBox="0 0 24 24"><path fill="#6b6f74" d="M12 2C6.48 2 2 6.48 2 12s4.48 10 10 10 10-4.48 10-10S17.52 2 12 2zm-1 14H9V8h2v8zm4 0h-2V8h2v8z"/></svg>
<svg class="i" style="left:110.0px;top:873.6px" width="16.4" height="13.2" viewBox="0 0 20 16"><rect x="0" y="0" width="20" height="16" rx="1.8" fill="#80868b"/><path d="M2.8 12l4.2-4.6 3.4 3 5.6-6" fill="none" stroke="#fff" stroke-width="1.9" stroke-linejoin="round" stroke-linecap="round"/><path d="M11.5 3.4h2.6M12.8 2.1v2.6" stroke="#fff" stroke-width="1" fill="none"/></svg>
<div class="t" style="left:135.00px;top:875.37px;font-size:10.2px;color:#2268d4;letter-spacing:-0.157px;">CZ Leads- Performance Max-2509</div>
<div class="t" style="left:439.50px;top:875.37px;font-size:10.2px;color:#74787d;letter-spacing:-0.179px;">CZK70.00/d...</div>
<svg class="i" style="left:505.2px;top:871.9px" width="16.6" height="16.2" viewBox="0 0 20 20"><rect x="3.2" y="3.6" width="14" height="13" fill="none" stroke="#bdc1c6" stroke-width="1.5"/><path d="M4 15.5l4.2-5 3 3.4 2.3-2.4 3.3 4" fill="none" stroke="#bdc1c6" stroke-width="1.3"/><path d="M1.2 1.2l18 18" stroke="#bdc1c6" stroke-width="1.5"/></svg>
<div class="t" style="left:551.20px;top:875.37px;font-size:10.2px;color:#74787d;letter-spacing:-0.232px;">Paused</div>
<div class="t" style="left:624.85px;top:872.06px;font-size:13.4px;color:#6a6e73;">–</div>
<div class="t" style="left:646.70px;top:875.37px;font-size:10.2px;color:#6a6e73;letter-spacing:-0.079px;">Performance Max</div>
<div class="t" style="left:752.31px;top:875.37px;font-size:10.2px;color:#6a6e73;letter-spacing:-0.100px;">58,316</div>
<div class="t" style="left:846.48px;top:869.52px;font-size:10.2px;color:#6a6e73;letter-spacing:-0.100px;">646</div><div class="t" style="left:836.60px;top:881.22px;font-size:10.2px;color:#6a6e73;letter-spacing:-0.100px;">Clicks</div>
<div class="t" style="left:906.74px;top:875.37px;font-size:10.2px;color:#6a6e73;letter-spacing:-0.100px;">1.11%</div>
<div class="t" style="left:964.95px;top:875.37px;font-size:10.2px;color:#6a6e73;letter-spacing:-0.100px;">CZK2.56</div>
<div class="t" style="left:1085.00px;top:875.37px;font-size:10.2px;color:#6a6e73;letter-spacing:-0.100px;">CZK1,655.29</div>
<div class="t" style="left:1158.50px;top:875.37px;font-size:10.2px;color:#2268d4;letter-spacing:-0.031px;">Maximise conversions</div>
<div class="t" style="left:1299.21px;top:875.37px;font-size:10.2px;color:#6a6e73;letter-spacing:-0.100px;">51.86%</div>
<div class="t" style="left:1349.71px;top:875.37px;font-size:10.2px;color:#6a6e73;letter-spacing:-0.100px;">335.00</div>
<div class="t" style="left:1475.65px;top:875.37px;font-size:10.2px;color:#6a6e73;letter-spacing:-0.100px;">CZK4.94</div>
<div class="r" style="left:38px;top:911.1px;width:13px;height:13px;border:1.7px solid #55585c;border-radius:1.5px"></div>
<svg class="i" style="left:66.60px;top:911.40px;" width="12.2" height="12.2" viewBox="0 0 24 24"><path fill="#6b6f74" d="M12 2C6.48 2 2 6.48 2 12s4.48 10 10 10 10-4.48 10-10S17.52 2 12 2zm-1 14H9V8h2v8zm4 0h-2V8h2v8z"/></svg>
<svg class="i" style="left:110.0px;top:911.1px" width="16.4" height="13.2" viewBox="0 0 20 16"><rect x="0" y="0" width="20" height="16" rx="1.8" fill="#80868b"/><path d="M2.8 12l4.2-4.6 3.4 3 5.6-6" fill="none" stroke="#fff" stroke-width="1.9" stroke-linejoin="round" stroke-linecap="round"/><path d="M11.5 3.4h2.6M12.8 2.1v2.6" stroke="#fff" stroke-width="1" fill="none"/></svg>
<div class="t" style="left:135.00px;top:913.27px;font-size:10.2px;color:#2268d4;letter-spacing:-0.106px;">rusky jayyk_Website traffic-Performance Max</div>
<div class="t" style="left:439.50px;top:913.27px;font-size:10.2px;color:#74787d;letter-spacing:-0.179px;">CZK70.00/d...</div>
<svg class="i" style="left:505.2px;top:909.4px" width="16.6" height="16.2" viewBox="0 0 20 20"><rect x="3.2" y="3.6" width="14" height="13" fill="none" stroke="#bdc1c6" stroke-width="1.5"/><path d="M4 15.5l4.2-5 3 3.4 2.3-2.4 3.3 4" fill="none" stroke="#bdc1c6" stroke-width="1.3"/><path d="M1.2 1.2l18 18" stroke="#bdc1c6" stroke-width="1.5"/></svg>
<div class="t" style="left:551.20px;top:913.27px;font-size:10.2px;color:#74787d;letter-spacing:-0.232px;">Paused</div>
<div class="t" style="left:624.85px;top:909.96px;font-size:13.4px;color:#6a6e73;">–</div>
<div class="t" style="left:646.70px;top:913.27px;font-size:10.2px;color:#6a6e73;letter-spacing:-0.079px;">Performance Max</div>
<div class="t" style="left:752.31px;top:913.27px;font-size:10.2px;color:#6a6e73;letter-spacing:-0.100px;">17,686</div>
<div class="t" style="left:846.48px;top:901.57px;font-size:10.2px;color:#6a6e73;letter-spacing:-0.100px;">373</div><div class="t" style="left:833.87px;top:913.27px;font-size:10.2px;color:#6a6e73;letter-spacing:-0.100px;">Clicks,</div><div class="t" style="left:802.49px;top:924.97px;font-size:10.2px;color:#6a6e73;letter-spacing:-0.100px;">engagements</div>
<div class="t" style="left:906.74px;top:913.27px;font-size:10.2px;color:#6a6e73;letter-spacing:-0.100px;">2.11%</div>
<div class="t" style="left:964.95px;top:913.27px;font-size:10.2px;color:#6a6e73;letter-spacing:-0.100px;">CZK3.49</div>
<div class="t" style="left:1085.00px;top:913.27px;font-size:10.2px;color:#6a6e73;letter-spacing:-0.100px;">CZK1,300.45</div>
<div class="t" style="left:1158.50px;top:913.27px;font-size:10.2px;color:#2268d4;letter-spacing:-0.031px;">Maximise conversions</div>
<div class="t" style="left:1299.21px;top:913.27px;font-size:10.2px;color:#6a6e73;letter-spacing:-0.100px;">60.32%</div>
<div class="t" style="left:1349.71px;top:913.27px;font-size:10.2px;color:#6a6e73;letter-spacing:-0.100px;">225.00</div>
<div class="t" style="left:1475.65px;top:913.27px;font-size:10.2px;color:#6a6e73;letter-spacing:-0.100px;">CZK5.78</div>
<div class="r" style="left:38px;top:956.6px;width:13px;height:13px;border:1.7px solid #55585c;border-radius:1.5px"></div>
<svg class="i" style="left:66.60px;top:956.90px;" width="12.2" height="12.2" viewBox="0 0 24 24"><path fill="#6b6f74" d="M12 2C6.48 2 2 6.48 2 12s4.48 10 10 10 10-4.48 10-10S17.52 2 12 2zm-1 14H9V8h2v8zm4 0h-2V8h2v8z"/></svg>
<svg class="i" style="left:110.0px;top:956.6px" width="16.4" height="13.2" viewBox="0 0 20 16"><rect x="0.9" y="0.9" width="18.2" height="14.2" rx="1.2" fill="#fff" stroke="#80868b" stroke-width="1.8"/><rect x="1.5" y="3.2" width="5" height="10" fill="#80868b"/><circle cx="12.3" cy="8.2" r="3.1" fill="none" stroke="#80868b" stroke-width="1.7"/><path d="M14.5 10.6l3.4 3.6" stroke="#80868b" stroke-width="1.9"/></svg>
<div class="t" style="left:135.00px;top:959.47px;font-size:10.2px;color:#2268d4;letter-spacing:-0.171px;">CZ Search-1 test Praha+ stredni cechy</div>
<div class="t" style="left:439.50px;top:959.47px;font-size:10.2px;color:#74787d;letter-spacing:-0.179px;">CZK70.00/d...</div>
<svg class="i" style="left:505.2px;top:954.9px" width="16.6" height="16.2" viewBox="0 0 20 20"><rect x="3.2" y="3.6" width="14" height="13" fill="none" stroke="#bdc1c6" stroke-width="1.5"/><path d="M4 15.5l4.2-5 3 3.4 2.3-2.4 3.3 4" fill="none" stroke="#bdc1c6" stroke-width="1.3"/><path d="M1.2 1.2l18 18" stroke="#bdc1c6" stroke-width="1.5"/></svg>
<div class="t" style="left:551.30px;top:944.87px;font-size:10.2px;color:#74787d;letter-spacing:-0.232px;">Paused</div>
<div class="r" style="left:551.3px;top:962.8px;width:39px;height:22.4px;background:#fef3d6;border-radius:3px 0 0 3px;overflow:hidden"><svg class="i" style="left:9.2px;top:5px" width="13.5" height="13.2" viewBox="0 0 20 20"><rect x="1.5" y="1.5" width="17" height="17" rx="1.5" fill="none" stroke="#d9502b" stroke-width="2.4"/><path d="M3.5 13l4.5-4.6 3.3 3.2 5-5.6" fill="none" stroke="#d9502b" stroke-width="2.2"/></svg><div class="t" style="left:30.20px;top:7.26px;font-size:10.799999999999999px;color:#e8710a;-webkit-text-stroke:0.2px #e8710a;">Limited</div></div>
<div class="t" style="left:624.85px;top:956.16px;font-size:13.4px;color:#6a6e73;">–</div>
<div class="t" style="left:646.70px;top:959.47px;font-size:10.2px;color:#6a6e73;letter-spacing:-0.253px;">Search</div>
<div class="t" style="left:758.63px;top:959.47px;font-size:10.2px;color:#6a6e73;letter-spacing:-0.100px;">6,211</div>
<div class="t" style="left:846.48px;top:953.62px;font-size:10.2px;color:#6a6e73;letter-spacing:-0.100px;">126</div><div class="t" style="left:836.60px;top:965.32px;font-size:10.2px;color:#6a6e73;letter-spacing:-0.100px;">Clicks</div>
<div class="t" style="left:905.98px;top:959.47px;font-size:10.2px;color:#6a6e73;letter-spacing:-0.100px;">2.03%</div>
<div class="t" style="left:959.38px;top:959.47px;font-size:10.2px;color:#6a6e73;letter-spacing:-0.100px;">CZK12.89</div>
<div class="t" style="left:1085.00px;top:959.47px;font-size:10.2px;color:#6a6e73;letter-spacing:-0.100px;">CZK1,623.90</div>
<div class="t" style="left:1158.50px;top:959.47px;font-size:10.2px;color:#2268d4;letter-spacing:-0.031px;">Maximise conversions</div>
<div class="t" style="left:1299.21px;top:959.47px;font-size:10.2px;color:#6a6e73;letter-spacing:-0.100px;">40.48%</div>
<div class="t" style="left:1355.28px;top:959.47px;font-size:10.2px;color:#6a6e73;letter-spacing:-0.100px;">51.00</div>
<div class="t" style="left:1470.08px;top:959.47px;font-size:10.2px;color:#6a6e73;letter-spacing:-0.100px;">CZK31.84</div>
<div class="r" style="left:38px;top:1002.0px;width:13px;height:13px;border:1.7px solid #55585c;border-radius:1.5px"></div>
<svg class="i" style="left:66.60px;top:1002.30px;" width="12.2" height="12.2" viewBox="0 0 24 24"><path fill="#6b6f74" d="M12 2C6.48 2 2 6.48 2 12s4.48 10 10 10 10-4.48 10-10S17.52 2 12 2zm-1 14H9V8h2v8zm4 0h-2V8h2v8z"/></svg>
<svg class="i" style="left:110.0px;top:1002.0px" width="16.4" height="13.2" viewBox="0 0 20 16"><rect x="0.9" y="0.9" width="18.2" height="14.2" rx="1.2" fill="#fff" stroke="#80868b" stroke-width="1.8"/><rect x="1.5" y="3.2" width="5" height="10" fill="#80868b"/><circle cx="12.3" cy="8.2" r="3.1" fill="none" stroke="#80868b" stroke-width="1.7"/><path d="M14.5 10.6l3.4 3.6" stroke="#80868b" stroke-width="1.9"/></svg>
<div class="t" style="left:135.00px;top:1004.27px;font-size:10.2px;color:#2268d4;letter-spacing:-0.203px;">rusky jazyk Search-2</div>
<div class="t" style="left:439.50px;top:1004.27px;font-size:10.2px;color:#74787d;letter-spacing:-0.179px;">CZK70.00/d...</div>
<svg class="i" style="left:505.2px;top:1000.3px" width="16.6" height="16.2" viewBox="0 0 20 20"><rect x="3.2" y="3.6" width="14" height="13" fill="none" stroke="#bdc1c6" stroke-width="1.5"/><path d="M4 15.5l4.2-5 3 3.4 2.3-2.4 3.3 4" fill="none" stroke="#bdc1c6" stroke-width="1.3"/><path d="M1.2 1.2l18 18" stroke="#bdc1c6" stroke-width="1.5"/></svg>
<div class="t" style="left:551.20px;top:1004.27px;font-size:10.2px;color:#74787d;letter-spacing:-0.232px;">Paused</div>
<div class="t" style="left:624.85px;top:1000.96px;font-size:13.4px;color:#6a6e73;">–</div>
<div class="t" style="left:646.70px;top:1004.27px;font-size:10.2px;color:#6a6e73;letter-spacing:-0.253px;">Search</div>
<div class="t" style="left:757.88px;top:1004.27px;font-size:10.2px;color:#6a6e73;letter-spacing:-0.100px;">1,564</div>
<div class="t" style="left:852.06px;top:998.42px;font-size:10.2px;color:#6a6e73;letter-spacing:-0.100px;">65</div><div class="t" style="left:836.60px;top:1010.12px;font-size:10.2px;color:#6a6e73;letter-spacing:-0.100px;">Clicks</div>
<div class="t" style="left:905.98px;top:1004.27px;font-size:10.2px;color:#6a6e73;letter-spacing:-0.100px;">4.16%</div>
<div class="t" style="left:959.38px;top:1004.27px;font-size:10.2px;color:#6a6e73;letter-spacing:-0.100px;">CZK22.29</div>
<div class="t" style="left:1085.00px;top:1004.27px;font-size:10.2px;color:#6a6e73;letter-spacing:-0.100px;">CZK1,448.55</div>
<div class="t" style="left:1158.50px;top:1004.27px;font-size:10.2px;color:#2268d4;letter-spacing:-0.031px;">Maximise conversions</div>
<div class="t" style="left:1299.21px;top:1004.27px;font-size:10.2px;color:#6a6e73;letter-spacing:-0.100px;">78.46%</div>
<div class="t" style="left:1355.28px;top:1004.27px;font-size:10.2px;color:#6a6e73;letter-spacing:-0.100px;">51.00</div>
<div class="t" style="left:1470.08px;top:1004.27px;font-size:10.2px;color:#6a6e73;letter-spacing:-0.100px;">CZK28.40</div>
<div class="r" style="left:38px;top:1039.6px;width:13px;height:13px;border:1.7px solid #55585c;border-radius:1.5px"></div>
<svg class="i" style="left:66.60px;top:1039.90px;" width="12.2" height="12.2" viewBox="0 0 24 24"><path fill="#6b6f74" d="M12 2C6.48 2 2 6.48 2 12s4.48 10 10 10 10-4.48 10-10S17.52 2 12 2zm-1 14H9V8h2v8zm4 0h-2V8h2v8z"/></svg>
<svg class="i" style="left:110.0px;top:1039.6px" width="16.4" height="13.2" viewBox="0 0 20 16"><rect x="0" y="0" width="20" height="16" rx="1.8" fill="#80868b"/><path d="M2.8 12l4.2-4.6 3.4 3 5.6-6" fill="none" stroke="#fff" stroke-width="1.9" stroke-linejoin="round" stroke-linecap="round"/><path d="M11.5 3.4h2.6M12.8 2.1v2.6" stroke="#fff" stroke-width="1" fill="none"/></svg>
<div class="t" style="left:135.00px;top:1041.67px;font-size:10.2px;color:#2268d4;letter-spacing:-0.161px;">Campaign #1</div>
<div class="t" style="left:439.50px;top:1041.67px;font-size:10.2px;color:#74787d;letter-spacing:-0.179px;">CZK50.00/d...</div>
<svg class="i" style="left:505.2px;top:1037.9px" width="16.6" height="16.2" viewBox="0 0 20 20"><rect x="3.2" y="3.6" width="14" height="13" fill="none" stroke="#bdc1c6" stroke-width="1.5"/><path d="M4 15.5l4.2-5 3 3.4 2.3-2.4 3.3 4" fill="none" stroke="#bdc1c6" stroke-width="1.3"/><path d="M1.2 1.2l18 18" stroke="#bdc1c6" stroke-width="1.5"/></svg>
<div class="t" style="left:551.20px;top:1041.67px;font-size:10.2px;color:#74787d;letter-spacing:-0.232px;">Paused</div>
<div class="t" style="left:624.85px;top:1038.36px;font-size:13.4px;color:#6a6e73;">–</div>
<div class="t" style="left:646.70px;top:1041.67px;font-size:10.2px;color:#6a6e73;letter-spacing:-0.079px;">Performance Max</div>
<div class="t" style="left:777.33px;top:1041.67px;font-size:10.2px;color:#6a6e73;letter-spacing:-0.100px;">0</div>
<div class="t" style="left:857.63px;top:1041.67px;font-size:10.2px;color:#6a6e73;letter-spacing:-0.100px;">0</div>
<div class="t" style="left:927.05px;top:1038.36px;font-size:13.4px;color:#6a6e73;">–</div>
<div class="t" style="left:997.15px;top:1038.36px;font-size:13.4px;color:#6a6e73;">–</div>
<div class="t" style="left:1104.45px;top:1041.67px;font-size:10.2px;color:#6a6e73;letter-spacing:-0.100px;">CZK0.00</div>
<div class="t" style="left:1158.50px;top:1041.67px;font-size:10.2px;color:#2268d4;letter-spacing:-0.031px;">Maximise conversions</div>
<div class="t" style="left:1304.78px;top:1041.67px;font-size:10.2px;color:#6a6e73;letter-spacing:-0.100px;">0.00%</div>
<div class="t" style="left:1360.85px;top:1041.67px;font-size:10.2px;color:#6a6e73;letter-spacing:-0.100px;">0.00</div>
<div class="t" style="left:1475.65px;top:1041.67px;font-size:10.2px;color:#6a6e73;letter-spacing:-0.100px;">CZK0.00</div>
<div class="t" style="left:108.10px;top:1078.67px;font-size:10.2px;color:#3c4043;letter-spacing:-0.061px;">Total: All but removed campaigns in your current view</div>
<svg class="i" style="left:353.20px;top:1076.30px;" width="12.6" height="12.6" viewBox="0 0 24 24"><path fill="#5f6368" d="M11 18h2v-2h-2v2zm1-16C6.48 2 2 6.48 2 12s4.48 10 10 10 10-4.48 10-10S17.52 2 12 2zm0 18c-4.41 0-8-3.59-8-8s3.59-8 8-8 8 3.59 8 8-3.59 8-8 8zm0-14c-2.21 0-4 1.79-4 4h2c0-1.1.9-2 2-2s2 .9 2 2c0 2-3 1.75-3 5h2c0-2.25 3-2.5 3-5 0-2.21-1.79-4-4-4z"/></svg>
<div class="t" style="left:624.85px;top:1075.36px;font-size:13.4px;color:#3f4246;">–</div>
<div class="t" style="left:752.31px;top:1078.67px;font-size:10.2px;color:#3f4246;letter-spacing:-0.100px;">83,777</div>
<div class="t" style="left:838.18px;top:1066.97px;font-size:10.2px;color:#3f4246;letter-spacing:-0.100px;">1,210</div><div class="t" style="left:833.87px;top:1078.67px;font-size:10.2px;color:#3f4246;letter-spacing:-0.100px;">Clicks,</div><div class="t" style="left:802.49px;top:1090.37px;font-size:10.2px;color:#3f4246;letter-spacing:-0.100px;">engagements</div>
<div class="t" style="left:905.98px;top:1078.67px;font-size:10.2px;color:#3f4246;letter-spacing:-0.100px;">1.44%</div>
<div class="t" style="left:964.95px;top:1078.67px;font-size:10.2px;color:#3f4246;letter-spacing:-0.100px;">CZK4.98</div>
<div class="t" style="left:1085.00px;top:1078.67px;font-size:10.2px;color:#3f4246;letter-spacing:-0.100px;">CZK6,028.19</div>
<div class="t" style="left:1299.21px;top:1078.67px;font-size:10.2px;color:#3f4246;letter-spacing:-0.100px;">54.71%</div>
<div class="t" style="left:1349.71px;top:1078.67px;font-size:10.2px;color:#3f4246;letter-spacing:-0.100px;">662.00</div>
<div class="t" style="left:1476.41px;top:1078.67px;font-size:10.2px;color:#3f4246;letter-spacing:-0.100px;">CZK9.11</div>
<div class="t" style="left:108.10px;top:1114.57px;font-size:10.2px;color:#3c4043;letter-spacing:0.050px;">Total: Account</div>
<svg class="i" style="left:179.20px;top:1112.30px;" width="12.6" height="12.6" viewBox="0 0 24 24"><path fill="#5f6368" d="M11 18h2v-2h-2v2zm1-16C6.48 2 2 6.48 2 12s4.48 10 10 10 10-4.48 10-10S17.52 2 12 2zm0 18c-4.41 0-8-3.59-8-8s3.59-8 8-8 8 3.59 8 8-3.59 8-8 8zm0-14c-2.21 0-4 1.79-4 4h2c0-1.1.9-2 2-2s2 .9 2 2c0 2-3 1.75-3 5h2c0-2.25 3-2.5 3-5 0-2.21-1.79-4-4-4z"/></svg>
<div class="t" style="left:444.40px;top:1114.57px;font-size:10.2px;color:#3f4246;letter-spacing:-0.093px;">CZK0.00/day</div>
<div class="t" style="left:624.85px;top:1111.26px;font-size:13.4px;color:#3f4246;">–</div>
<div class="t" style="left:752.31px;top:1114.57px;font-size:10.2px;color:#3f4246;letter-spacing:-0.100px;">83,777</div>
<div class="t" style="left:838.18px;top:1102.87px;font-size:10.2px;color:#3f4246;letter-spacing:-0.100px;">1,210</div><div class="t" style="left:833.87px;top:1114.57px;font-size:10.2px;color:#3f4246;letter-spacing:-0.100px;">Clicks,</div><div class="t" style="left:802.49px;top:1126.27px;font-size:10.2px;color:#3f4246;letter-spacing:-0.100px;">engagements</div>
<div class="t" style="left:905.98px;top:1114.57px;font-size:10.2px;color:#3f4246;letter-spacing:-0.100px;">1.44%</div>
<div class="t" style="left:964.95px;top:1114.57px;font-size:10.2px;color:#3f4246;letter-spacing:-0.100px;">CZK4.98</div>
<div class="t" style="left:1085.00px;top:1114.57px;font-size:10.2px;color:#3f4246;letter-spacing:-0.100px;">CZK6,028.19</div>
<div class="t" style="left:1299.21px;top:1114.57px;font-size:10.2px;color:#3f4246;letter-spacing:-0.100px;">54.71%</div>
<div class="t" style="left:1349.71px;top:1114.57px;font-size:10.2px;color:#3f4246;letter-spacing:-0.100px;">662.00</div>
<div class="t" style="left:1476.41px;top:1114.57px;font-size:10.2px;color:#3f4246;letter-spacing:-0.100px;">CZK9.11</div>
<svg class="i" style="left:65.90px;top:1106.10px;" width="23" height="23" viewBox="0 0 24 24"><path fill="#3c4043" d="M16.59 8.59L12 13.17 7.41 8.59 6 10l6 6 6-6z"/></svg>
<div class="t" style="left:1466.55px;top:1153.90px;font-size:10.4px;color:#3c4043;letter-spacing:0.046px;-webkit-text-stroke:0.3px #3c4043;">1 - 5 of 5</div>
</div>
</body></html>
